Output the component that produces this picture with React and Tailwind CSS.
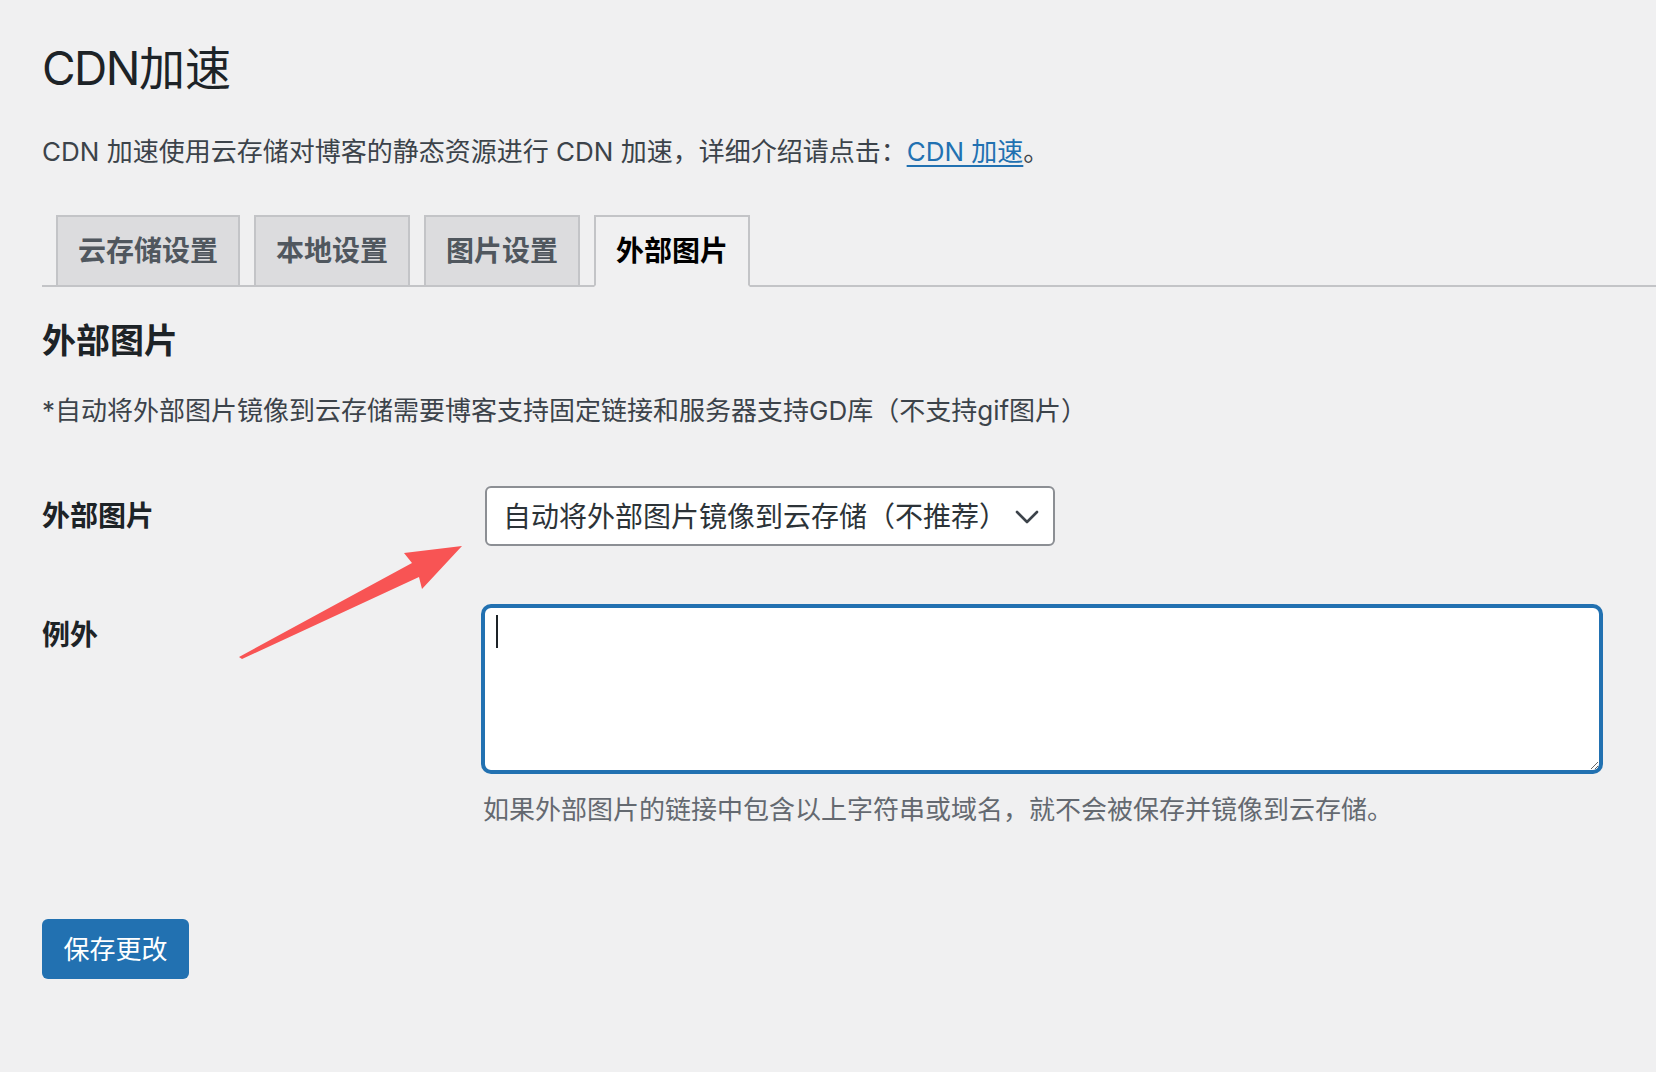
import React from "react";

const tabs = [
  { label: "云存储设置", active: false },
  { label: "本地设置", active: false },
  { label: "图片设置", active: false },
  { label: "外部图片", active: true },
];

function Tab({ label, active }) {
  return (
    <div
      className={
        "ml-[14px] -mb-[2px] border-2 px-[20px] py-[10px] text-[28px] leading-[48px] font-semibold " +
        (active
          ? "bg-[#f0f0f1] border-[#c3c4c7] border-b-[#f0f0f1] text-black"
          : "bg-[#dcdcde] border-[#c3c4c7] text-[#50575e]")
      }
    >
      {label}
    </div>
  );
}

export default function App() {
  return (
    <div className="relative w-full h-[1072px] overflow-hidden bg-[#f0f0f1] text-[#3c434a] font-['Inter','Noto_Sans_CJK_SC',sans-serif]">
      <div className="pl-[42px] pt-[20px]">
        <h1 className="pt-[18px] pb-[8px] text-[46px] leading-[60px] font-normal text-[#1d2327]">
          <span className="tracking-[-1.5px]">CDN</span>加速
        </h1>
        <p className="mt-[26px] text-[26px] leading-[39px]">
          CDN 加速使用云存储对博客的静态资源进行 CDN 加速，详细介绍请点击：
          <a className="text-[#2271b1] underline underline-offset-[4px]">CDN 加速</a>。
        </p>

        <div className="mt-[26px] pt-[18px] flex border-b-2 border-[#c3c4c7]">
          {tabs.map((t) => (
            <Tab key={t.label} {...t} />
          ))}
        </div>

        <h2 className="mt-[36px] text-[34px] leading-[36px] font-semibold text-[#1d2327]">外部图片</h2>
        <p className="mt-[32px] text-[26px] leading-[39px]">
          *自动将外部图片镜像到云存储需要博客支持固定链接和服务器支持GD库（不支持gif图片）
        </p>

        {/* settings rows */}
        <div className="mt-[26px] flex flex-col">
          <div className="flex">
            <div className="w-[441px] shrink-0 pt-[42px] text-[28px] leading-[36px] font-semibold text-[#1d2327]">
              外部图片
            </div>
            <div className="py-[30px]">
              <div className="ml-[2px] flex h-[60px] w-[570px] items-center justify-between rounded-[6px] border-2 border-[#8c8f94] bg-white pl-[16px] pr-[14px] pt-[2px] text-[28px] text-[#2c3338]">
                <span>自动将外部图片镜像到云存储（不推荐）</span>
                <svg width="24" height="14" viewBox="0 0 24 14" fill="none">
                  <path d="M2 2 L12 12 L22 2" stroke="#3c434a" strokeWidth="2.6" strokeLinecap="round" strokeLinejoin="round" />
                </svg>
              </div>
            </div>
          </div>

          <div className="flex">
            <div className="w-[441px] shrink-0 pt-[41px] text-[28px] leading-[36px] font-semibold text-[#1d2327]">
              例外
            </div>
            <div className="pt-[30px] pb-[30px]">
              <div className="relative">
                <textarea
                  className="block h-[166px] w-[1118px] rounded-[8px] border-2 border-[#2271b1] bg-white shadow-[0_0_0_2px_#2271b1] outline-none p-[12px] text-[28px]"
                  defaultValue=""
                />
                <span className="absolute left-[13px] top-[9px] h-[33px] w-[2px] bg-[#1d2327]" />
              </div>
              <p className="mt-[18px] text-[26px] leading-[39px] text-[#646970]">
                如果外部图片的链接中包含以上字符串或域名，就不会被保存并镜像到云存储。
              </p>
            </div>
          </div>
        </div>

        <button className="mt-[60px] h-[60px] w-[147px] rounded-[6px] bg-[#2271b1] text-[26px] text-white">
          保存更改
        </button>
      </div>

      {/* red annotation arrow */}
      <svg className="pointer-events-none absolute left-0 top-0" width="1656" height="1072" viewBox="0 0 1656 1072">
        <polygon
          points="239,657 412,563 404,553 462,546 422,589 419,577 242,659"
          fill="#f85454"
          strokeLinejoin="round"
        />
      </svg>
    </div>
  );
}
